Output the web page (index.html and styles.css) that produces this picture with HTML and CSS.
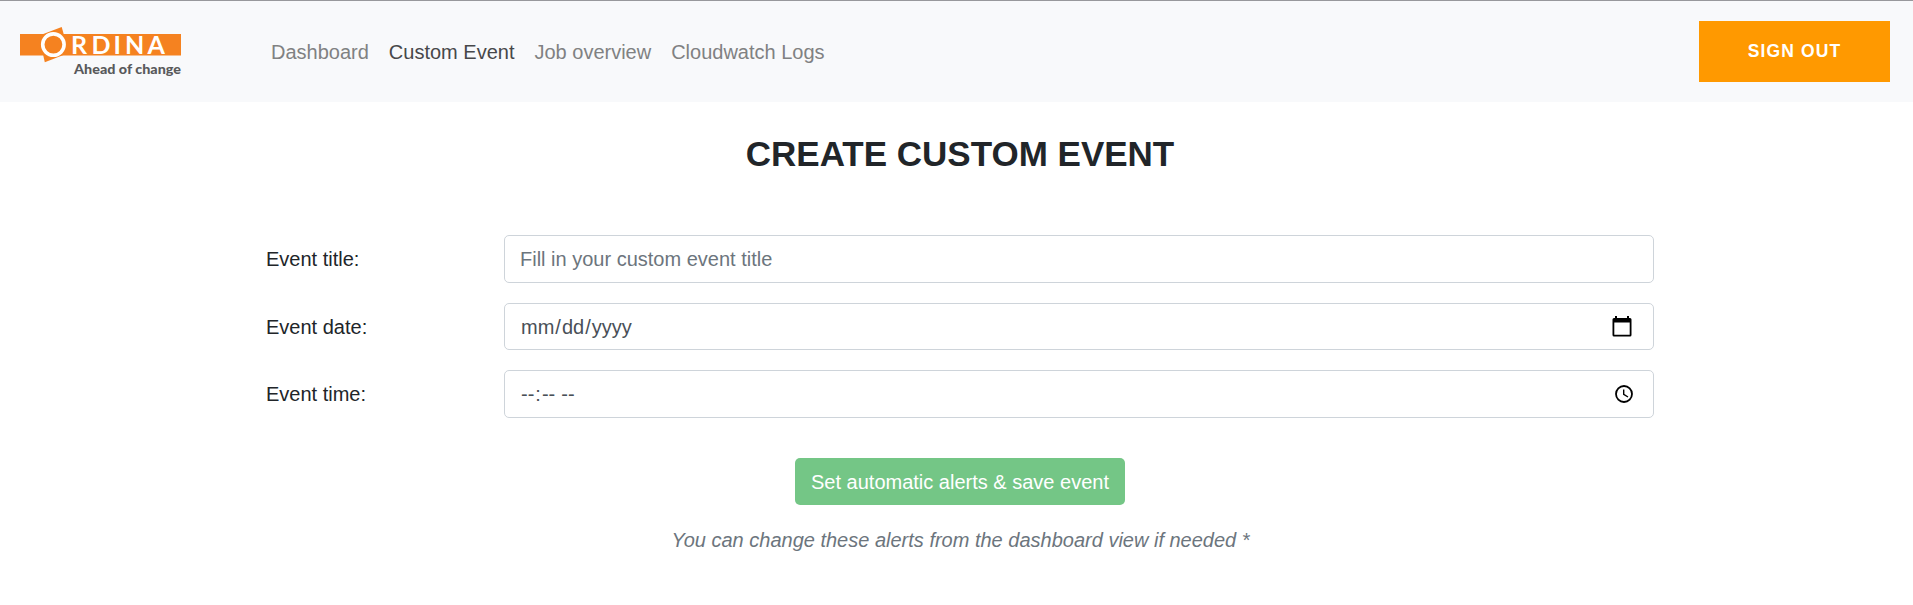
FILE: index.html
```html
<!DOCTYPE html>
<html lang="en-US">
<head>
<meta charset="utf-8">
<title>Create custom event</title>
<link rel="stylesheet" href="styles.css">
</head>
<body>
<header class="navbar">
  <a class="brand" href="#">
    <svg class="logo" width="162" height="52" viewBox="0 0 162 52">
      <rect x="0" y="8" width="161" height="21.500" fill="#f58220"/>
      <path d="M22 8.500L41.700 1L44.500 11V24L43.500 29L24.800 36.200L22 24Z" fill="#f58220"/>
      <circle cx="33.400" cy="18.600" r="10.700" fill="none" stroke="#fff" stroke-width="3.600"/>
      <g class="wordmark">
        <text x="51" y="28">R</text><text x="71.500" y="28">D</text><text x="93.500" y="28">I</text><text x="105" y="28">N</text><text x="127.500" y="28">A</text>
      </g>
      <text class="tagline" x="54" y="47.500" textLength="107" lengthAdjust="spacingAndGlyphs">Ahead of change</text>
    </svg>
  </a>
  <nav class="links">
    <a class="link" href="#">Dashboard</a>
    <a class="link active" href="#">Custom Event</a>
    <a class="link" href="#">Job overview</a>
    <a class="link" href="#">Cloudwatch Logs</a>
  </nav>
  <button class="signout">SIGN OUT</button>
</header>
<main class="container">
  <h1 class="title">CREATE CUSTOM EVENT</h1>
  <form class="form">
    <label class="label" for="title">Event title:</label>
    <div class="control"><input class="field" id="title" type="text" placeholder="Fill in your custom event title"></div>
    <label class="label" for="date">Event date:</label>
    <div class="control control-date">
      <input class="field" id="date" type="date">
      <svg class="icon-date" width="20" height="21" viewBox="0 0 20 21">
        <path fill-rule="evenodd" d="M3 0h2v2h10V0h2v2h1a1.500 1.500 0 0 1 1.500 1.500V19a1.500 1.500 0 0 1-1.500 1.500H2A1.500 1.500 0 0 1 .5 19V3.500A1.500 1.500 0 0 1 2 2h1zM2.300 6.500v12.200h15.400V6.500z"/>
      </svg>
    </div>
    <label class="label" for="time">Event time:</label>
    <div class="control">
      <input class="field field-time" id="time" type="time">
      <svg class="icon-time" width="18" height="18" viewBox="0 0 18 18" fill="none" stroke="#000">
        <circle cx="9" cy="9" r="8" stroke-width="1.800"/>
        <path d="M8.700 4.500V9.400L13 12" stroke-width="1.400"/>
      </svg>
    </div>
  </form>
  <button class="save" disabled>Set automatic alerts &amp; save event</button>
  <p class="hint">You can change these alerts from the dashboard view if needed *</p>
</main>
</body>
</html>
```
FILE: styles.css
```css
* { box-sizing: border-box; }
body {
  margin: 0;
  background: #fff;
  color: #212529;
  font: 20px/30px "Liberation Sans", Arial, sans-serif;
}
.navbar {
  display: flex;
  align-items: center;
  height: 102px;
  padding: 0 23px 0 20px;
  border-top: 1px solid #98989c;
  background: #f8f9fb;
}
.brand { display: flex; width: 251px; }
.wordmark { font: bold 25px Lato, sans-serif; fill: #fff; }
.tagline { font: 900 14px Lato, sans-serif; fill: #58595b; }
.links { display: flex; gap: 20px; flex: 1; }
.link { color: #808182; text-decoration: none; }
.link.active { color: #47484a; }
.signout {
  width: 191px;
  height: 61px;
  padding: 0;
  border: 0;
  background: #ff9900;
  color: #fff;
  font: bold 17.5px "Liberation Sans", Arial, sans-serif;
  letter-spacing: 1.1px;
}
.container {
  display: flex;
  flex-direction: column;
  align-items: center;
  width: 1388px;
  margin-left: 266px;
}
.title { margin: 31px 0 0; font-size: 35px; line-height: 42px; }
.form {
  display: grid;
  grid-template-columns: 238px 1150px;
  align-items: center;
  row-gap: 20px;
  margin-top: 60px;
}
.control {
  display: flex;
  align-items: center;
  height: 48px;
  padding: 0 20px 0 15px;
  border: 1px solid #ced4da;
  border-radius: 5px;
}
.control-date { height: 47px; padding-right: 21px; }
.field {
  flex: 1;
  height: 30px;
  padding: 0;
  border: 0;
  outline: 0;
  background: transparent;
  color: #495057;
  font: 20px/30px "Liberation Sans", Arial, sans-serif;
}
.field::placeholder { color: #6c757d; }
.field::-webkit-calendar-picker-indicator { display: none; }
.field-time { letter-spacing: 0.4px; }
.save {
  height: 47px;
  margin-top: 40px;
  padding: 1px 16px 0;
  border: 0;
  border-radius: 5px;
  background: #74c686;
  color: #fff;
  font: 20px/30px "Liberation Sans", Arial, sans-serif;
}
.hint { margin: 20px 0 0; padding-left: 1px; color: #6c757d; font-style: italic; }
```
